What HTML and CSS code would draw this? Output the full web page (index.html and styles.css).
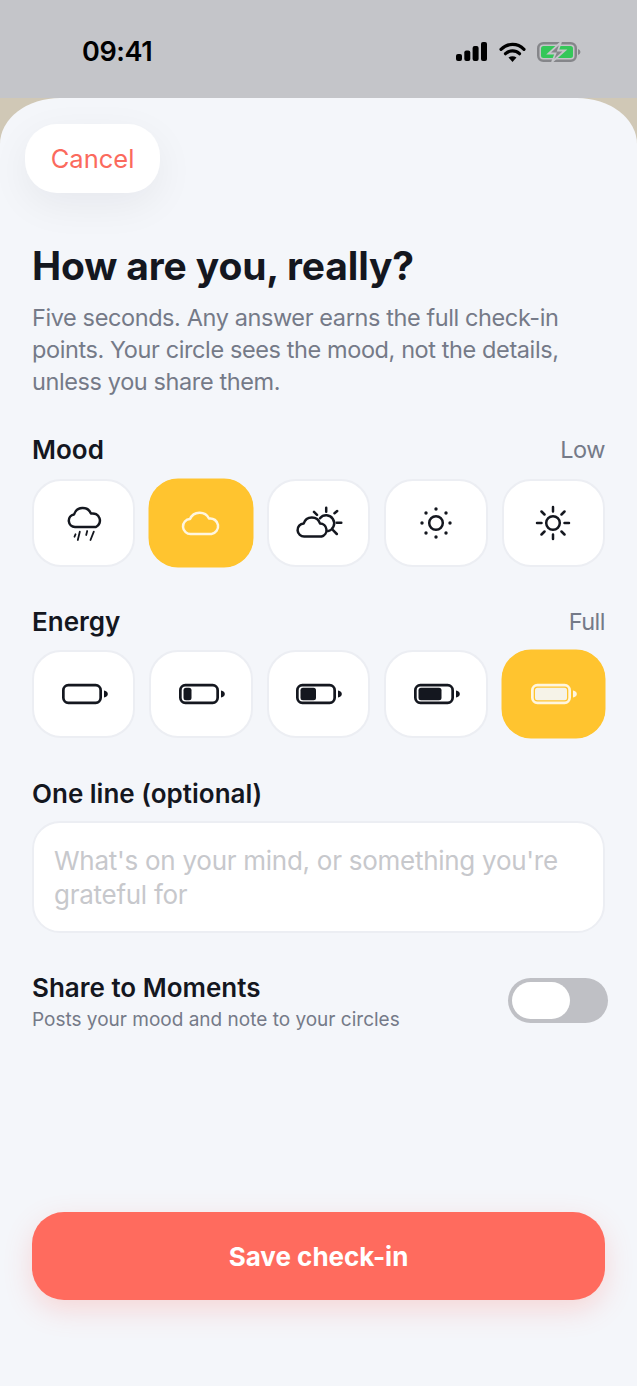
FILE: index.html
```html
<!DOCTYPE html>
<html lang="en">
<head>
<meta charset="utf-8">
<title>Check-in</title>
<link rel="stylesheet" href="styles.css">
</head>
<body>
<div class="status">
  <span class="time">09:41</span>
  <div class="status-icons">
    <svg width="31" height="19" viewBox="0 0 31 19" class="i-signal"><rect x="0" y="12" width="6" height="7" rx="2"/><rect x="8.300" y="8.500" width="6" height="10.500" rx="2"/><rect x="16.600" y="4" width="6" height="15" rx="2"/><rect x="25" y="0" width="6" height="19" rx="2"/></svg>
    <svg width="27" height="20" viewBox="0 0 27 20" class="i-wifi"><path d="M2 7.300C8.500 .8 18.500 .8 25 7.300" fill="none" stroke="#000" stroke-width="3.200" stroke-linecap="round"/><path d="M6.500 11.700C10.500 8 16.500 8 20.500 11.700" fill="none" stroke="#000" stroke-width="3.200" stroke-linecap="round"/><path d="M9.500 15.500Q13.500 12.800 17.500 15.500L13.500 20Z"/></svg>
    <svg width="44" height="20" viewBox="0 0 44 20" class="i-batt"><rect x="1.250" y="1.250" width="37.500" height="17.500" rx="5" fill="none" stroke="#85868a" stroke-width="2.500"/><rect x="4" y="4" width="32" height="12" rx="2.500" fill="#34c759"/><path d="M41 7q2.500 1 2.500 3t-2.500 3z" fill="#85868a"/><path d="M24 0L11.500 11.500h7L15 20 28 8.500h-7z" fill="#85868a" stroke="#c4c5c9" stroke-width="1.800"/></svg>
  </div>
</div>
<main class="sheet">
  <button class="cancel">Cancel</button>
  <h1 class="title">How are you, really?</h1>
  <p class="lede">Five seconds. Any answer earns the full check-in points. Your circle sees the mood, not the details, unless you share them.</p>

  <div class="row-head"><span class="label">Mood</span><span class="value">Low</span></div>
  <div class="tiles">
    <div class="tile">
      <svg class="ico" width="48" height="48" viewBox="0 0 48 48"><path d="M15 28a6.300 6.300 0 0 1-1-12.500A9 9 0 0 1 31 14.600A7.200 7.200 0 0 1 36 28Z"/><path class="thin" d="M15.500 35.300l-1 2.400M19.800 32.700l-2 8.300M27.200 32l-1 4M33.800 32.700l-3.300 8.300"/></svg>
    </div>
    <div class="tile on">
      <svg class="ico" width="48" height="48" viewBox="0 0 48 48"><path d="M14 35a7.500 7.500 0 0 1-1-15A10.500 10.500 0 0 1 32 19.500A7.800 7.800 0 0 1 34.500 35Z"/></svg>
    </div>
    <div class="tile">
      <svg class="ico" width="48" height="48" viewBox="0 0 48 48"><path d="M10.500 37.500a6.500 6.500 0 0 1-.8-13A8.500 8.500 0 0 1 26 24.500A6.600 6.600 0 0 1 27.500 37.500Z"/><path d="M26 19.200A8 8 0 1 1 34 32.100"/><path d="M32.200 8.700v4M40.500 14.300l2.700-2.300M42.700 23.700h4.600M39 31.200l3.800 3.800M20 12.900l3 3"/></svg>
    </div>
    <div class="tile">
      <svg class="ico" width="48" height="48" viewBox="0 0 48 48"><circle cx="24" cy="24" r="6.800"/><g class="dots"><circle cx="24" cy="10" r="1.700"/><circle cx="34" cy="14" r="1.700"/><circle cx="38" cy="24" r="1.700"/><circle cx="34" cy="34" r="1.700"/><circle cx="24" cy="38" r="1.700"/><circle cx="14" cy="34" r="1.700"/><circle cx="10" cy="24" r="1.700"/><circle cx="14" cy="14" r="1.700"/></g></svg>
    </div>
    <div class="tile">
      <svg class="ico" width="48" height="48" viewBox="0 0 48 48"><circle cx="24" cy="24" r="6.800"/><path d="M24 8v4.500M24 35.500V40M8 24h4.500M35.500 24H40M12.500 12.500l3 3M32.500 32.500l3 3M12.500 35.500l3-3M32.500 15.500l3-3"/></svg>
    </div>
  </div>

  <div class="row-head energy"><span class="label">Energy</span><span class="value">Full</span></div>
  <div class="tiles tiles-energy">
    <div class="tile"><svg class="batt" width="48" height="24" viewBox="0 0 48 24"><rect x="3.350" y="3.200" width="37.300" height="17.600" rx="5"/><path class="nub" d="M44 8.500c2.500.5 3.800 1.600 3.800 3.500s-1.300 3-3.800 3.500z"/></svg></div>
    <div class="tile"><svg class="batt" width="48" height="24" viewBox="0 0 48 24"><rect x="3.350" y="3.200" width="37.300" height="17.600" rx="5"/><rect class="fill" x="6.500" y="5.800" width="8" height="12.400" rx="2.500"/><path class="nub" d="M44 8.500c2.500.5 3.800 1.600 3.800 3.500s-1.300 3-3.800 3.500z"/></svg></div>
    <div class="tile"><svg class="batt" width="48" height="24" viewBox="0 0 48 24"><rect x="3.350" y="3.200" width="37.300" height="17.600" rx="5"/><rect class="fill" x="6.500" y="5.800" width="15.500" height="12.400" rx="2.500"/><path class="nub" d="M44 8.500c2.500.5 3.800 1.600 3.800 3.500s-1.300 3-3.800 3.500z"/></svg></div>
    <div class="tile"><svg class="batt" width="48" height="24" viewBox="0 0 48 24"><rect x="3.350" y="3.200" width="37.300" height="17.600" rx="5"/><rect class="fill" x="6.500" y="5.800" width="23" height="12.400" rx="2.500"/><path class="nub" d="M44 8.500c2.500.5 3.800 1.600 3.800 3.500s-1.300 3-3.800 3.500z"/></svg></div>
    <div class="tile on"><svg class="batt" width="48" height="24" viewBox="0 0 48 24"><rect x="3.350" y="3.200" width="37.300" height="17.600" rx="5"/><rect class="fill" x="6" y="5.800" width="32" height="12.400" rx="2.500"/><path class="nub" d="M44 8.500c2.500.5 3.800 1.600 3.800 3.500s-1.300 3-3.800 3.500z"/></svg></div>
  </div>

  <div class="label oneline">One line (optional)</div>
  <div class="note">What's on your mind, or something you're grateful for</div>

  <div class="share">
    <div>
      <div class="label">Share to Moments</div>
      <div class="share-sub">Posts your mood and note to your circles</div>
    </div>
    <div class="toggle"><span class="knob"></span></div>
  </div>

  <button class="save">Save check-in</button>
</main>
</body>
</html>
```
FILE: styles.css
```css
* { box-sizing: border-box; }
html, body { margin: 0; height: 100%; }
body {
  width: 637px;
  height: 1386px;
  overflow: hidden;
  background: #d0c8b6;
  font-family: Inter, "Liberation Sans", sans-serif;
  color: #14171f;
  display: flex;
  flex-direction: column;
}
.status {
  height: 98px;
  flex: none;
  background: #c4c5c9;
  display: flex;
  justify-content: space-between;
  align-items: center;
  padding: 5px 56px 0 82px;
}
.time { font-size: 27px; font-weight: 600; color: #000; letter-spacing: -0.4px; }
.status-icons { display: flex; align-items: center; gap: 11.5px; }
.i-signal, .i-wifi { fill: #000; }
.sheet {
  flex: 1;
  background: #f4f6fa;
  border-radius: 60px 60px 0 0 / 46px 46px 0 0;
  padding: 26px 32px 86px;
  display: flex;
  flex-direction: column;
  min-height: 0;
}
button { font-family: inherit; border: 0; }
.cancel {
  align-self: flex-start;
  margin-left: -7px;
  width: 135px;
  height: 69px;
  border-radius: 32px;
  background: #fff;
  color: #fb6a5d;
  font-size: 25.5px;
  box-shadow: 0 12px 40px rgba(20, 23, 31, 0.06);
}
.title { margin: 48px 0 0; font-size: 39px; line-height: 50px; font-weight: 700; letter-spacing: -0.15px; }
.lede { margin: 11px 0 0; font-size: 23.5px; line-height: 32px; color: #757a88; letter-spacing: -0.4px; }
.row-head { display: flex; justify-content: space-between; align-items: center; margin-top: 35px; height: 34px; }
.row-head.energy { margin-top: 38px; }
.label { font-size: 26px; font-weight: 600; line-height: 34px; }
.value { font-size: 23.5px; color: #757a88; letter-spacing: -0.5px; margin-bottom: 2px; }
.tiles { display: grid; grid-template-columns: repeat(5, 1fr); gap: 14px; margin-top: 12px; }
.tiles-energy { margin-top: 11px; }
.tile {
  height: 88px;
  background: #fff;
  border: 2px solid #eceef3;
  border-radius: 29px;
  display: flex;
  align-items: center;
  justify-content: center;
}
.tile.on { background: #ffc42f; border-color: #ffc42f; box-shadow: 0 0 0 0.5px #ffc42f; }
.ico { fill: none; stroke: #14171f; stroke-width: 2.500; stroke-linecap: round; stroke-linejoin: round; overflow: visible; }
.ico .thin { stroke-width: 1.800; }
.ico .dots { fill: #14171f; stroke: none; }
.tile.on .ico { stroke: #fff6df; }
.batt { overflow: visible; }
.batt rect { fill: none; stroke: #14171f; stroke-width: 2.700; }
.batt .fill { fill: #14171f; stroke: none; }
.batt .nub { fill: #14171f; }
.tile.on .batt rect { stroke: #fff6df; }
.tile.on .batt .fill { fill: #f6f3e8; stroke: none; }
.tile.on .batt .nub { fill: #fff6df; }
.oneline { margin-top: 39px; }
.note {
  margin-top: 10px;
  height: 112px;
  background: #fff;
  border: 2px solid #eceef3;
  border-radius: 28px;
  padding: 21px 20px;
  font-size: 26px;
  line-height: 34px;
  color: #c7c8cc;
  letter-spacing: -0.27px;
}
.share { margin-top: 38px; display: flex; justify-content: space-between; align-items: flex-start; }
.share-sub { font-size: 19px; line-height: 26px; color: #757a88; margin-top: 2px; }
.toggle {
  width: 100px;
  height: 45px;
  margin: 7px -3px 0 0;
  border-radius: 23px;
  background: #bfc0c5;
  padding: 4px;
}
.knob { display: block; width: 58px; height: 37px; border-radius: 19px; background: #fff; }
.save {
  margin-top: auto;
  height: 88px;
  border-radius: 32px;
  background: #ff6b5e;
  color: #fff;
  font-size: 26px;
  font-weight: 700;
  box-shadow: 0 10px 28px rgba(255, 107, 94, 0.22);
}
```
